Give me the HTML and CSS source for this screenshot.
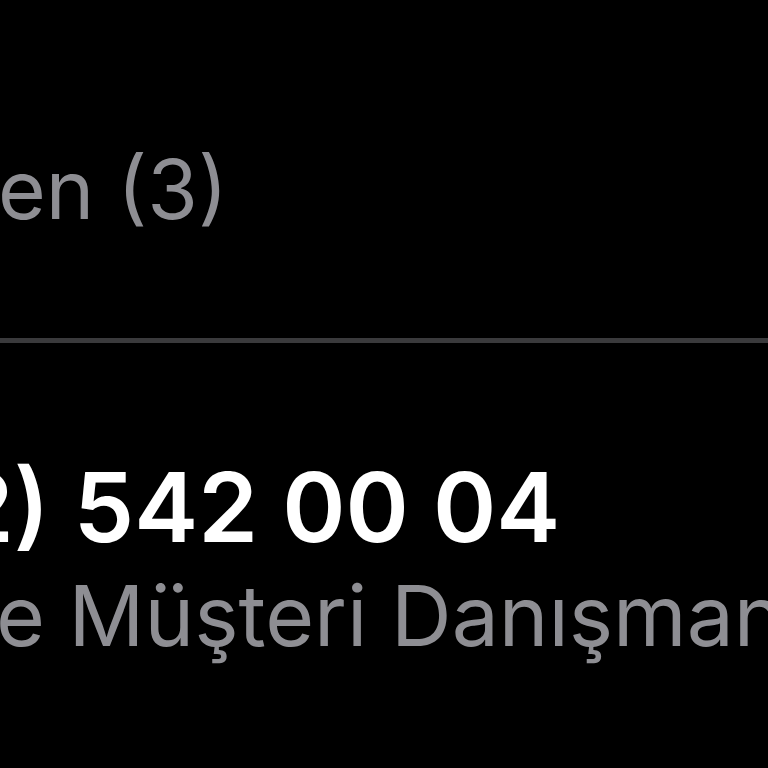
FILE: index.html
```html
<!DOCTYPE html>
<html lang="tr">
<head>
<meta charset="utf-8">
<title>Kişi</title>
<link rel="stylesheet" href="styles.css">
</head>
<body>
<main class="screen">
  <div class="section-title">en (3)</div>
  <hr class="divider">
  <div class="contact">
    <div class="phone">2) 542 00 04</div>
    <div class="label">e Müşteri Danışmanı</div>
  </div>
</main>
</body>
</html>
```
FILE: styles.css
```css
html, body {
  margin: 0;
  padding: 0;
  background: #000;
  width: 768px;
  height: 768px;
  overflow: hidden;
}
.screen {
  width: 768px;
  height: 768px;
  overflow: hidden;
  font-family: Inter, "Noto Sans", sans-serif;
  display: flex;
  flex-direction: column;
  padding-top: 142px;
  box-sizing: border-box;
}
.section-title {
  font-size: 82px;
  line-height: 96px;
  color: #8e8e93;
  white-space: nowrap;
  margin-left: -2px;
}
.divider {
  border: 0;
  margin: 100px 0 0 0;
  height: 5px;
  background: #3a3a3c;
  width: 100%;
}
.contact {
  margin-top: 110px;
  display: flex;
  flex-direction: column;
  gap: 7px;
}
.phone {
  font-size: 96px;
  line-height: 108px;
  font-weight: 600;
  color: #fff;
  white-space: nowrap;
  margin-left: -46px;
}
.label {
  font-size: 84px;
  line-height: 96px;
  color: #8e8e93;
  white-space: nowrap;
  margin-left: -4px;
}
```
